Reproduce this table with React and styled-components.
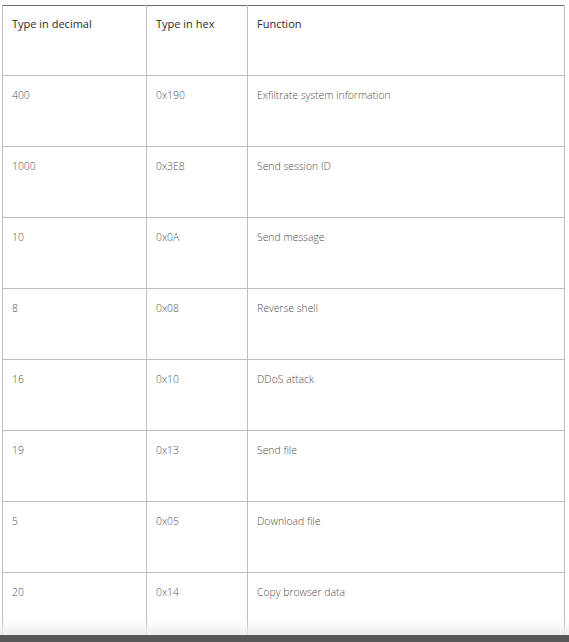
import React from 'react';
import styled, { createGlobalStyle } from 'styled-components';

const GlobalStyle = createGlobalStyle`
  html, body {
    margin: 0;
    padding: 0;
    background: #fff;
    overflow: hidden;
  }
  body {
    font-family: 'Open Sans', 'Liberation Sans', sans-serif;
  }
`;

const Page = styled.div`
  position: relative;
  width: 569px;
  height: 642px;
  overflow: hidden;
  padding: 5px 0 0 2px;
  box-sizing: border-box;
`;

const Table = styled.table`
  border-collapse: collapse;
  table-layout: fixed;
  width: 562px;
  border: 1px solid #6b6b6b;
`;

const Col = styled.col`
  width: ${({ $w }) => $w}px;
`;

const HeadCell = styled.th`
  height: 70px;
  padding: 10px 9px 0;
  box-sizing: border-box;
  vertical-align: top;
  text-align: left;
  font-size: 11px;
  font-weight: 500;
  color: #2a2a2a;
  border: 1px solid #bdbdbd;
  border-top: none;
`;

const Cell = styled.td`
  height: 71px;
  padding: 12px 9px 0;
  box-sizing: border-box;
  vertical-align: top;
  font-size: 10.4px;
  font-weight: 300;
  color: #505050;
  border: 1px solid #bdbdbd;
`;

const BottomBar = styled.div`
  position: absolute;
  left: 0;
  right: 0;
  bottom: 0;
  height: 24px;
  background: linear-gradient(
    to bottom,
    rgba(255, 255, 255, 0) 0,
    rgba(236, 236, 236, 0.9) 17px,
    #575757 17px,
    #575757 100%
  );
`;

const rows = [
  ['400', '0x190', 'Exfiltrate system information'],
  ['1000', '0x3E8', 'Send session ID'],
  ['10', '0x0A', 'Send message'],
  ['8', '0x08', 'Reverse shell'],
  ['16', '0x10', 'DDoS attack'],
  ['19', '0x13', 'Send file'],
  ['5', '0x05', 'Download file'],
  ['20', '0x14', 'Copy browser data'],
];

const App = () => (
  <>
    <GlobalStyle />
    <Page>
      <Table>
        <colgroup>
          <Col $w={144} />
          <Col $w={101} />
          <Col $w={317} />
        </colgroup>
        <thead>
          <tr>
            <HeadCell>Type in decimal</HeadCell>
            <HeadCell>Type in hex</HeadCell>
            <HeadCell>Function</HeadCell>
          </tr>
        </thead>
        <tbody>
          {rows.map(([dec, hex, fn]) => (
            <tr key={dec}>
              <Cell>{dec}</Cell>
              <Cell>{hex}</Cell>
              <Cell>{fn}</Cell>
            </tr>
          ))}
        </tbody>
      </Table>
      <BottomBar />
    </Page>
  </>
);

export default App;
